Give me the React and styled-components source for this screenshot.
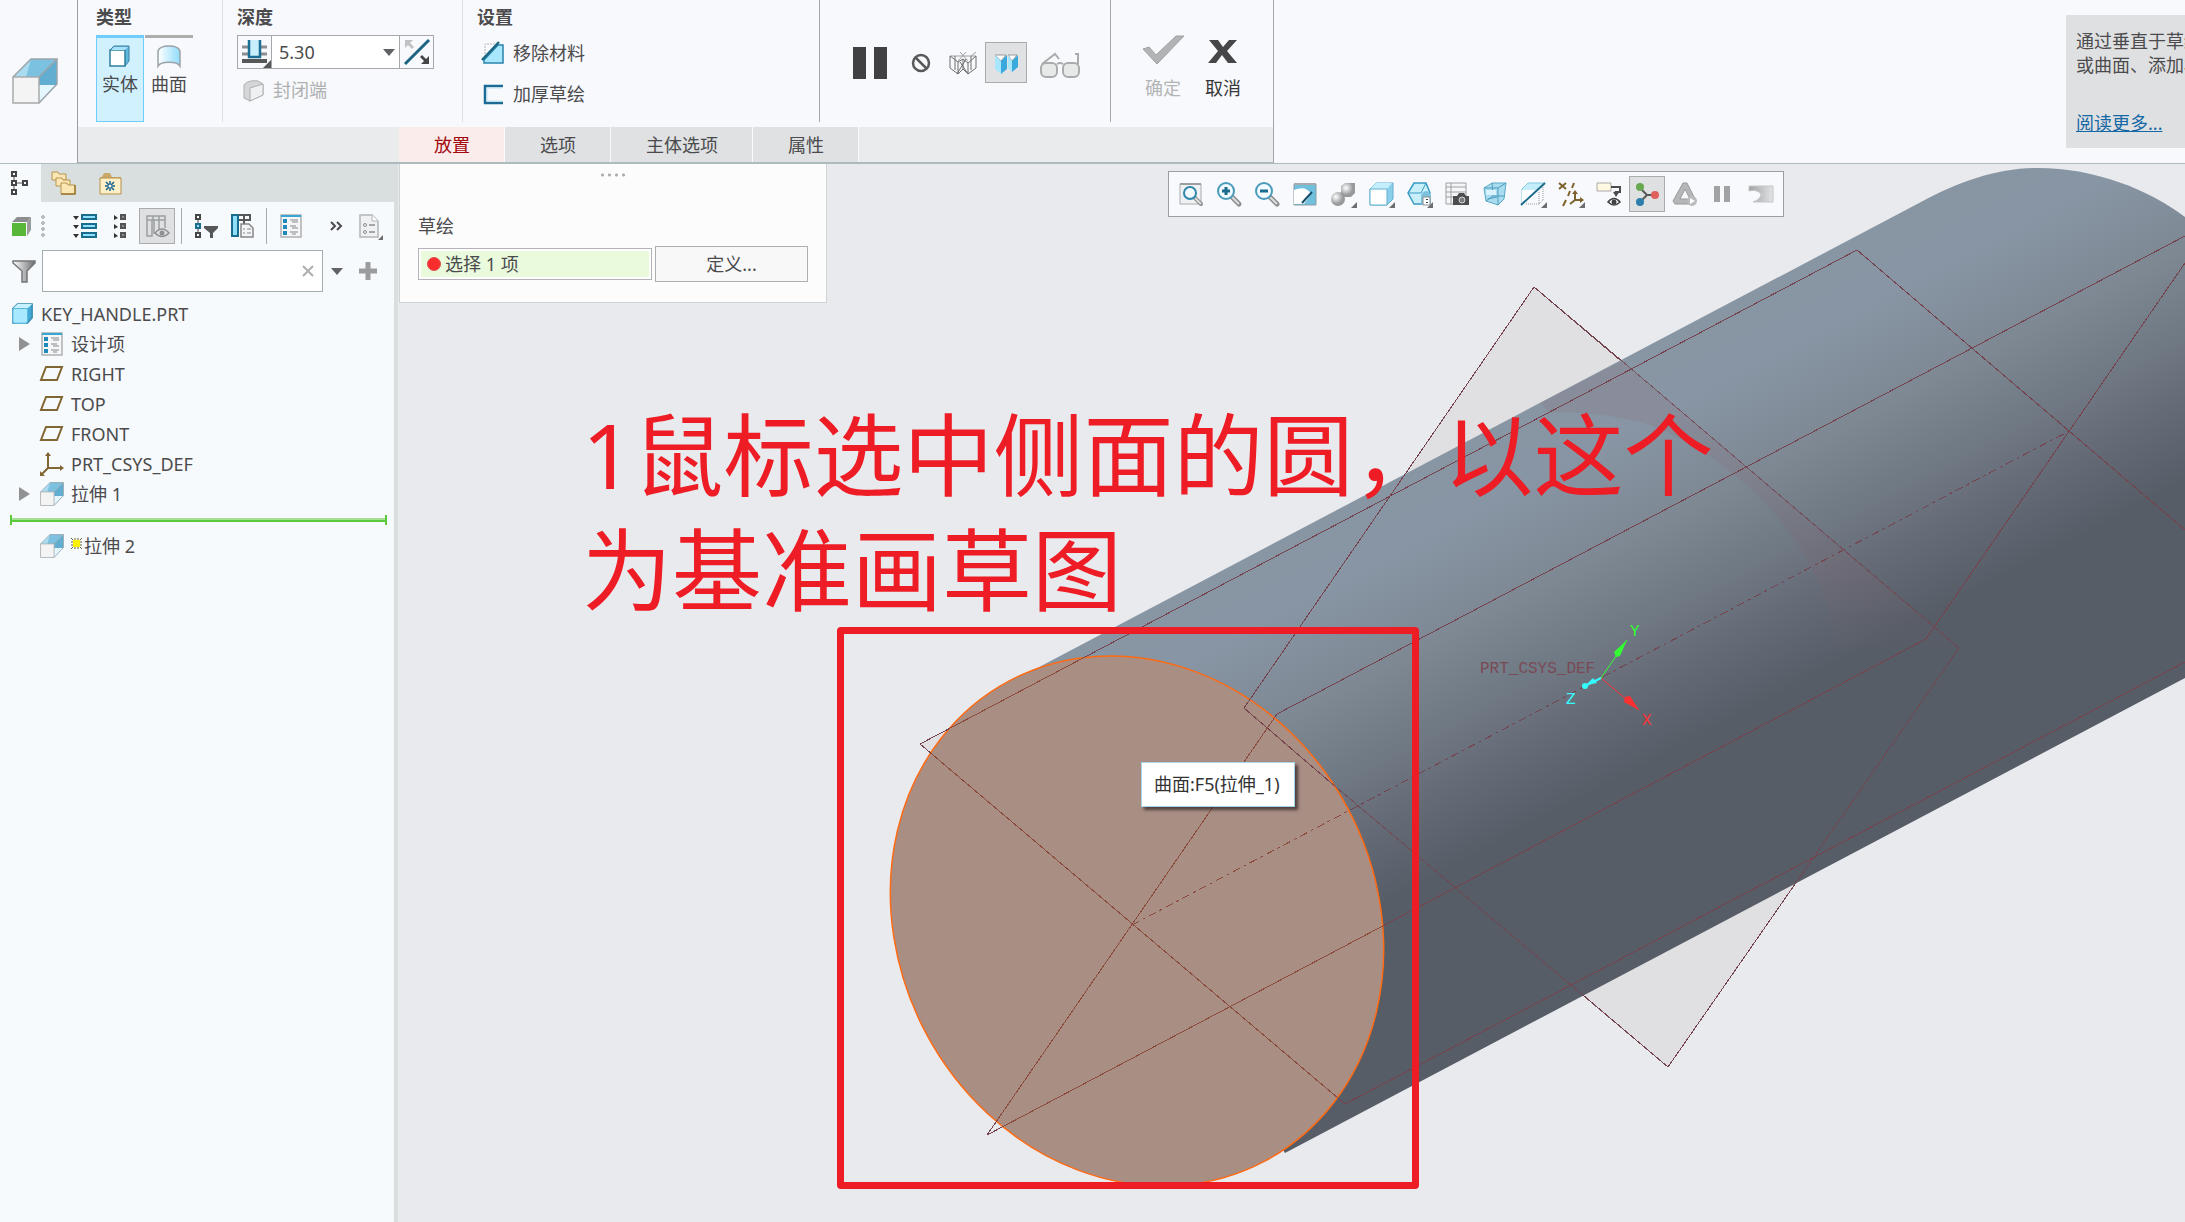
import React from 'react'
import styled, { createGlobalStyle, css } from 'styled-components'

const text = '#4b4b4d'
const panelBg = '#f7fafc'
const stripBg = '#d9dfde'
const line = '#aebabd'
const blue = '#1b6b8c'
const red = '#ee1c24'

const GlobalStyle = createGlobalStyle`
  * {
    box-sizing: border-box;
  }

  body {
    margin: 0;
    overflow: hidden;
    background: #e8eaee;
  }

  body, button, input {
    font-family: 'Noto Sans', 'Noto Sans CJK SC', sans-serif;
    font-size: 18px;
    line-height: 24px;
    color: ${text};
  }

  button {
    padding: 0;
    border: 0;
    background: none;
    white-space: nowrap;
  }
`

const Page = styled.div`
  display: flex;
  flex-direction: column;
  height: 100vh;
`

const Svg = styled.svg`
  display: block;
  flex: none;
  overflow: visible;
`

const Icon = ({ size = 24, box = 24, children }) => (
  <Svg width={size} height={size} viewBox={`0 0 ${box} ${box}`} fill="none" aria-hidden="true">
    {children}
  </Svg>
)

/* ---------- ribbon ---------- */

const Ribbon = styled.header`
  display: flex;
  height: 164px;
  flex: none;
  background: #f8f9fc;
  border-bottom: 1px solid ${line};
`

const RibbonLogo = styled.div`
  width: 78px;
  padding: 58px 0 0 12px;
  border-right: 1px solid #9a9ea1;
`

const RibbonMain = styled.div`
  display: flex;
  flex-direction: column;
  width: 1196px;
  border-right: 1px solid #a4a7aa;
`

const Groups = styled.div`
  display: flex;
  height: 127px;
`

const Group = styled.section`
  width: ${p => p.$width}px;
  padding: 5px 0 0 ${p => p.$pad || 14}px;
  margin: 0 0 5px;
  border-right: ${p => (p.$last ? 'none' : `1px solid ${p.$strong ? '#a4a7aa' : '#dfe1e4'}`)};
`

const GroupTitle = styled.h2`
  margin: 0 0 6px;
  font-size: 18px;
  line-height: 24px;
  font-weight: 700;
`

const ButtonRow = styled.div`
  display: flex;
  gap: 1px;
`

const TypeButton = styled.button`
  display: flex;
  flex-direction: column;
  align-items: center;
  gap: 4px;
  width: 48px;
  height: 87px;
  padding-top: 6px;
  border-top: 3px solid #adadad;
  ${p => p.$active && css`
    border: 1px solid #70cdfb;
    border-top: 3px solid #70cdfb;
    background: #d1f1fe;
  `}
`

const DepthField = styled.div`
  display: flex;
  width: 197px;
  height: 34px;
  background: #fff;
  border: 1px solid #a5a7a9;
`

const DepthMode = styled.button`
  display: flex;
  align-items: center;
  justify-content: center;
  width: 34px;
  background: #f8f9fc;
  border-right: 1px solid #a5a7a9;
`

const FlipButton = styled(DepthMode)`
  border-right: 0;
  border-left: 1px solid #a5a7a9;
`

const DepthInput = styled.input`
  flex: 1;
  min-width: 0;
  padding: 0 0 0 7px;
  border: 0;
  background: none;
`

const CaretButton = styled.button`
  display: flex;
  align-items: center;
  justify-content: center;
  width: 20px;
`

const OptionList = styled.div`
  display: flex;
  flex-direction: column;
  margin-top: -3px;
`

const OptionButton = styled.button`
  display: flex;
  align-items: center;
  gap: 8px;
  height: 41px;
  padding-left: 4px;
  color: ${p => (p.disabled ? '#aeb0b1' : text)};
`

const ControlRow = styled.div`
  display: flex;
  align-items: center;
  gap: 8px;
  height: 41px;
  margin-top: 37px;
`

const ControlButton = styled.button`
  display: flex;
  align-items: center;
  justify-content: center;
  width: ${p => p.$width || 42}px;
  height: 41px;
  ${p => p.$active && css`
    background: #e0e1e3;
    border: 1px solid #a9abad;
  `}
`

const ConfirmRow = styled.div`
  display: flex;
  gap: 16px;
  padding-top: 29px;
`

const ConfirmButton = styled.button`
  display: flex;
  flex-direction: column;
  align-items: center;
  gap: 10px;
  width: 44px;
  color: ${p => (p.disabled ? '#b3b5b6' : '#38383a')};
`

const DashTabs = styled.nav`
  display: flex;
  height: 36px;
  padding-left: 321px;
  background: #e9ebec;
  border-bottom: 1px solid ${line};
`

const DashTab = styled.button`
  padding: 0 34px 0 35px;
  background: ${p => (p.$active ? '#faeceb' : '#dfe1e2')};
  color: ${p => (p.$active ? '#a3080c' : text)};
  border-right: 1px solid #f8f9fc;
`

const HelpCard = styled.aside`
  width: 119px;
  height: 133px;
  margin: 15px 0 0 auto;
  padding: 14px 0 0 10px;
  background: #dfe0e1;
  white-space: nowrap;
  overflow: hidden;

  p {
    margin: 0 0 34px;
  }

  a {
    color: #1568a6;
    text-decoration: underline;
  }
`

/* ---------- model tree ---------- */

const Body = styled.div`
  display: flex;
  flex: 1;
  min-height: 0;
`

const Sidebar = styled.aside`
  display: flex;
  flex-direction: column;
  flex: none;
  width: 398px;
  background: ${panelBg};
  border-right: 4px solid ${stripBg};
`

const SideTabs = styled.div`
  display: flex;
  height: 38px;
  background: ${stripBg};
`

const SideTab = styled.button`
  display: flex;
  align-items: center;
  justify-content: center;
  width: ${p => p.$width || 46}px;
  background: ${p => (p.$active ? panelBg : 'none')};
`

const Toolbar = styled.div`
  display: flex;
  align-items: center;
  height: 48px;
  padding: 0 5px 0 4px;
`

const ToolButton = styled.button`
  display: flex;
  align-items: center;
  justify-content: center;
  flex: none;
  width: 36px;
  height: 36px;
  ${p => p.$active && css`
    background: #dfe0e2;
    border: 1px solid #a9abad;
  `}
`

const Grip = styled.span`
  width: 6px;
  height: 24px;
  margin-right: 21px;
  background: radial-gradient(circle, #b9bbbc 2px, transparent 2px) 0 0 / 6px 6px;
`

const Divider = styled.span`
  width: 1px;
  height: 36px;
  margin: 0 6px;
  background: #a9abad;
`

const Spacer = styled.span`
  flex: 1;
`

const FilterRow = styled.div`
  display: flex;
  align-items: center;
  height: 42px;
  padding-left: 12px;
`

const FilterBox = styled.div`
  display: flex;
  align-items: center;
  width: 281px;
  height: 42px;
  margin-left: 6px;
  padding-right: 8px;
  background: #fff;
  border: 1px solid #a3adaf;
`

const FilterInput = styled.input`
  flex: 1;
  min-width: 0;
  border: 0;
  background: none;
`

const SmallButton = styled.button`
  display: flex;
  align-items: center;
  justify-content: center;
  width: ${p => p.$width || 20}px;
  height: 24px;
`

const Tree = styled.ul`
  margin: 0;
  padding: 7px 0 0;
  list-style: none;
`

const TreeRow = styled.li`
  display: flex;
  align-items: center;
  height: 30px;
  padding-left: ${p => (p.$root ? 12 : 19)}px;
  gap: 7px;

  > i {
    display: flex;
    width: 14px;
  }
`

const TreeLabel = styled.span`
  display: flex;
  align-items: center;
  gap: 2px;

  svg {
    margin-bottom: 6px;
  }
`

const InsertBar = styled.li`
  display: flex;
  align-items: center;
  height: 22px;
  margin: 0 7px 0 10px;

  &::before,
  &::after {
    content: '';
    width: 2px;
    height: 10px;
    background: #5cc83c;
  }

  span {
    flex: 1;
    height: 4px;
    background: #5cc83c;
    border-top: 2px solid #a5e093;
  }
`

/* ---------- graphics area ---------- */

const Viewport = styled.main`
  position: relative;
  flex: 1;
  min-width: 0;
  overflow: hidden;
  background: #e8eaee;
`

const Scene = styled.svg`
  position: absolute;
  inset: 0;
  width: 100%;
  height: 100%;
`

const PlacementPanel = styled.section`
  position: absolute;
  top: 0;
  left: 1px;
  width: 428px;
  height: 139px;
  padding: 9px 18px 0;
  background: #fcfcfc;
  border: 1px solid #cfd4d6;
  border-top: 0;

  label {
    display: block;
    margin: 37px 0 8px;
  }
`

const PanelGrip = styled.div`
  width: 28px;
  height: 4px;
  margin: 0 auto;
  background: radial-gradient(circle, #a9abac 1px, transparent 2px) 0 0 / 7px 4px;
`

const CollectorRow = styled.div`
  display: flex;
  align-items: center;
  gap: 3px;
`

const Collector = styled.div`
  display: flex;
  align-items: center;
  gap: 4px;
  width: 234px;
  height: 32px;
  padding: 0 8px;
  background: #eafadd;
  border: 1px solid #b1b3b5;
  box-shadow: inset 0 0 0 2px #fff;

  &::before {
    content: '';
    width: 12px;
    height: 12px;
    border: 1px solid #d9544d;
    border-radius: 50%;
    background: #fb2c2c;
  }

  input {
    flex: 1;
    min-width: 0;
    padding: 0;
    border: 0;
    background: none;
  }
`

const DefineButton = styled.button`
  width: 153px;
  height: 36px;
  background: #f8f8f9;
  border: 1px solid #adafb1;
`

const ViewToolbar = styled.div`
  position: absolute;
  top: 7px;
  left: 770px;
  display: flex;
  gap: 2px;
  padding: 4px;
  background: #f8f9fc;
  border: 1px solid #9c9ea0;
`

const Tooltip = styled.div`
  position: absolute;
  top: 598px;
  left: 743px;
  padding: 9px 14px 10px 12px;
  background: #fff;
  border: 1px solid #a9d3ea;
  box-shadow: 3px 3px 3px rgba(40, 30, 30, 0.7);
  color: #333;
  white-space: nowrap;
`

const Note = styled.p`
  position: absolute;
  top: 233px;
  left: 184px;
  margin: 0;
  font-size: 90px;
  line-height: 115px;
  color: ${red};
  white-space: nowrap;
`

const Frame = styled.div`
  position: absolute;
  top: 463px;
  left: 439px;
  width: 582px;
  height: 562px;
  border: 7px solid ${red};
  border-radius: 4px;
`

/* ---------- icons ---------- */

const Caret = () => (
  <svg width="12" height="7" viewBox="0 0 12 7" aria-hidden="true"><path d="M0 0h12L6 7z" fill="#606264" /></svg>
)

const Corner = () => <path d="M26 20v6h-6z" fill="#6b6d6f" />

const ExtrudeIcon = ({ size }) => (
  <Icon size={size} box={46}>
    <path d="M1 19 19 1h26L27 19z" fill="#a9dcf1" />
    <path d="M19 1 14 19h13L45 1z" fill="#7cc2e0" />
    <path d="M27 19 45 1v25L27 45z" fill="#62aed0" />
    <path d="M27 27h17L27 45z" fill="#e4f7ff" />
    <path d="M1 19 19 1h26v25L27 45M27 19 45 1" stroke="#9aa4aa" strokeWidth="1.5" />
    <path d="M1 19h26v26H1z" fill="#f4f4f5" stroke="#a8a9ab" strokeWidth="1.5" />
  </Icon>
)

const SolidIcon = () => (
  <Icon>
    <path d="M2 6 6 2h15v15l-4 5z" fill="#5fb9df" stroke="#3a7f9f" />
    <path d="M2 6h15v16H2z" fill="#fff" stroke="#2f7f9f" strokeWidth="1.5" />
    <path d="m3 6 3-3h14l-3 3z" fill="#a8e2f8" />
  </Icon>
)

const SurfaceIcon = () => (
  <Icon>
    <defs>
      <linearGradient id="surf"><stop offset="0" stopColor="#fff" /><stop offset="1" stopColor="#8fdcfb" /></linearGradient>
    </defs>
    <path d="M1 22V7c1-3 4-5 11-5s10 2 11 5v15c-3-5-19-5-22 0z" fill="url(#surf)" stroke="#9aa3a8" strokeWidth="1.5" />
  </Icon>
)

const BlindDepthIcon = () => (
  <Icon size={28} box={28}>
    <path d="M1 9h6M1 16h6M20 9h6M20 16h6" stroke="#8b8d90" strokeWidth="3" />
    <path d="M1 23h25" stroke="#555759" strokeWidth="4" />
    <path d="M8 2v17h11V2" fill="#c9eefb" stroke="#1b6f95" strokeWidth="2.5" />
    <path d="M30 22v8h-8z" fill="#555759" />
  </Icon>
)

const FlipIcon = () => (
  <Icon size={28} box={28}>
    <path d="M2 26 26 2" stroke="#1b6482" strokeWidth="3" />
    <path d="M2 2h8L7 5l4 4-2 2-4-4-3 3z" fill="#bfc1c2" />
    <path d="M26 26h-8l3-3-4-4 2-2 4 4 3-3z" fill="#444648" />
  </Icon>
)

const CapIcon = () => (
  <Icon>
    <path d="M3 7c2-3 7-5 14-4l5 3v11L9 23l-6-3z" fill="#d4d6d7" stroke="#aeb0b1" />
    <path d="M9 10 22 6v11L9 23z" fill="#eff0f1" stroke="#aeb0b1" />
  </Icon>
)

const RemoveIcon = () => (
  <Icon>
    <path d="M4 22V3h12" stroke="#b2b4b6" strokeDasharray="2 1" />
    <path d="M3 22v-3L17 4h5v18z" fill="#a9e8fc" stroke="#2784ab" strokeWidth="1.5" />
    <path d="M1 19 18 1" stroke="#1b6482" strokeWidth="2.5" />
  </Icon>
)

const ThickenIcon = () => (
  <Icon><path d="M22 4H4v17h18" stroke="#1b6b94" strokeWidth="2.5" /><path d="M21 6H6v13h15" stroke="#bfe4f2" /></Icon>
)

const PauseIcon = () => (
  <Icon size={34} box={34}><path d="M0 1h13v32H0zM21 1h13v32H21z" fill="#414143" /></Icon>
)

const NoIcon = () => (
  <Icon size={20} box={20}>
    <circle cx="11" cy="10" r="8" stroke="#58595b" strokeWidth="2.5" />
    <path d="m5 4 12 12" stroke="#58595b" strokeWidth="2.5" />
  </Icon>
)

const WireIcon = () => (
  <Icon size={28} box={28}>
    <path d="M1 7h26M9 12l8-9M19 12l-8-9M22 7l5-4" stroke="#a0a1a3" />
    <path d="M1 7v12l8 6 5-5V10M1 7l8 6v12M14 10l-5 3M14 10l5 4v11M14 20l5 5 8-6V7l-8 7M6 7v14M22 7v14" stroke="#6e6f71" />
    <path d="m8 25 9-15M19 25l-8-12" stroke="#6e6f71" />
  </Icon>
)

const PairIcon = () => (
  <Icon size={28} box={28}>
    <path d="M3 6h11l-5 6z" fill="#fff" stroke="#999" />
    <path d="m3 6 6 6v13l-6-5z" fill="#a8e7fb" />
    <path d="m15 6-6 6v13l6-5z" fill="#3aa9dd" />
    <path d="M16 6h9l-5 6z" fill="#fff" stroke="#999" />
    <path d="m16 6 4 6v11l-4-4z" fill="#a8e7fb" />
    <path d="m26 6-6 6v11l6-5z" fill="#3aa9dd" />
  </Icon>
)

const GlassesIcon = () => (
  <Icon size={40} box={40}>
    <rect x="1" y="20" width="16" height="14" rx="5" fill="#e7e8e8" stroke="#a9abac" strokeWidth="2" />
    <rect x="23" y="20" width="16" height="14" rx="5" fill="#e7e8e8" stroke="#a9abac" strokeWidth="2" />
    <path d="M17 21q3-2 6 0M2 21 15 11l4 5M38 21V11h-3" stroke="#a9abac" strokeWidth="2" />
  </Icon>
)

const CheckIcon = () => (
  <svg width="42" height="32" viewBox="0 0 42 32" aria-hidden="true"><path d="m1 15 6-2 7 8L34 2h8L15 30z" fill="#b2b3b4" stroke="#a0a1a2" /></svg>
)

const CrossIcon = () => (
  <svg width="30" height="32" viewBox="0 0 30 32" aria-hidden="true"><path d="M1 6h9l5 7 6-7h8L19 17l10 12h-9l-6-8-6 8H0l10-12z" fill="#464648" /></svg>
)

const TreeTabIcon = () => (
  <Icon>
    <path d="M5 5v14M5 12h12" stroke="#555" />
    <path d="M3 1h4v4H3zM3 10h4v4H3zM3 19h4v4H3zM14 10h4v4h-4z" fill="#fff" stroke="#454547" strokeWidth="2" />
  </Icon>
)

const FoldersIcon = () => (
  <Icon>
    <g fill="#fbe7b4" stroke="#b89450">
      <path d="M0 9V1h6l1 2h7v6H0z" />
      <path d="M4 15V7h6l1 2h7v6H4z" />
      <path d="M9 22V12h6l1 2h7v9H9z" />
    </g>
    <path d="M23 14v9H9" stroke="#9c7730" strokeWidth="1.5" />
  </Icon>
)

const StarFolderIcon = () => (
  <Icon>
    <path d="M2 6h2l2-4h6l2 4h9v17H2z" fill="#cba96a" />
    <path d="M2 7h21v16H2z" fill="#fdf0c9" stroke="#b58f4b" />
    <path d="M12 10v10M7 15h10M8 11l8 8M16 11l-8 8" stroke="#135f86" strokeWidth="1.5" />
    <circle cx="12" cy="15" r="1.5" fill="#fff" />
  </Icon>
)

const GreenCubeIcon = () => (
  <Icon>
    <path d="m2 8 5-5h14l-4 5z" fill="#8b8d8f" />
    <path d="m17 8 4-5v13l-4 6z" fill="#999b9d" />
    <path d="M2 9h14v13H2z" fill="#58b738" />
  </Icon>
)

const ExpandIcon = () => (
  <Icon>
    <path d="M0 2h6L3 6zM0 11h6l-3 4zM0 20h6l-3 4z" fill="#333" />
    <path d="M9 1h14v4H9zM9 10h14v4H9zM9 19h14v4H9z" fill="#8fe0fb" stroke="#1b6b8c" strokeWidth="2" />
  </Icon>
)

const CollapseIcon = () => (
  <Icon>
    <path d="M5 1v5l4-2zM5 10v5l4-2zM5 19v5l4-2z" fill="#333" />
    <path d="M12 1h4v4h-4zM12 10h4v4h-4zM12 19h4v4h-4z" fill="#8b8d8f" stroke="#525456" strokeWidth="2" />
  </Icon>
)

const ColumnsEyeIcon = () => (
  <Icon>
    <path d="M2 2h18v4H2zM2 6h5v16H2zM14 6v9M9 6v14M20 6v8M8 2v4M14 2v4" stroke="#9c9ea0" strokeWidth="1.5" />
    <path d="M10 19q7-8 14 0-7 7-14 0z" fill="#dfe0e2" stroke="#8e9092" strokeWidth="1.5" />
    <circle cx="17" cy="19" r="2.5" fill="#8e9092" />
  </Icon>
)

const TreeFilterIcon = () => (
  <Icon>
    <path d="M4 4v17" stroke="#444" />
    <path d="M2 1h4v4H2zM2 19h4v4H2z" fill="#fff" stroke="#444648" strokeWidth="2" />
    <path d="M2 10h4v4H2z" fill="#8fe0fb" stroke="#1b6b8c" strokeWidth="2" />
    <path d="M10 12h14v2l-5 5v5h-3v-5l-6-5z" fill="#555759" />
  </Icon>
)

const ColumnsDocIcon = () => (
  <Icon>
    <path d="M8 1h12v5H8M14 1v5M14 6v4" stroke="#555759" strokeWidth="2" />
    <path d="M2 1h6v21H2z" fill="#8fe0fb" stroke="#1b6b8c" strokeWidth="2" />
    <path d="M11 10h8l4 4v9H11z" fill="#f3f4f5" stroke="#85878a" strokeWidth="1.5" />
    <path d="M13 15h2M13 19h2M17 15h4M17 19h4" stroke="#85878a" />
  </Icon>
)

const ItemsIcon = () => (
  <Icon>
    <path d="M2 1h20v22H2z" fill="#f5f6f7" stroke="#aeb0b2" strokeWidth="1.5" />
    <path d="M2 2h20" stroke="#37a6d3" strokeWidth="2" />
    <g stroke="#2089bb" strokeWidth="2">
      <path d="M5 6h2v2H5zM5 12h2v2H5zM5 18h2v2H5z" />
    </g>
    <path d="M11 6h8M13 8h6M11 12h6M13 14h6M11 18h8M13 20h4" stroke="#85878a" />
  </Icon>
)

const MoreIcon = () => (
  <Icon><path d="m8 8 4 4-4 4M14 8l4 4-4 4" stroke="#4b4b4d" strokeWidth="2" /></Icon>
)

const DocIcon = () => (
  <Icon>
    <path d="M1 1h12l6 6v16H1z" fill="#f0f1f2" stroke="#b3b5b7" strokeWidth="1.5" />
    <path d="M13 1v6h6" fill="#fff" stroke="#b3b5b7" />
    <circle cx="6" cy="11" r="1.5" stroke="#8b8d8f" />
    <circle cx="6" cy="18" r="1.5" stroke="#8b8d8f" />
    <path d="M10 11h6M10 18h6" stroke="#8b8d8f" strokeWidth="1.5" />
    <path d="M24 21v5h-5z" fill="#6b6d6f" />
  </Icon>
)

const FunnelIcon = () => (
  <Icon>
    <defs>
      <linearGradient id="funnel"><stop offset="0" stopColor="#fff" /><stop offset="1" stopColor="#6c6e70" /></linearGradient>
    </defs>
    <path d="M1 2h22v2l-8 8v11h-5V12L1 4z" fill="url(#funnel)" stroke="#747678" strokeWidth="1.5" />
  </Icon>
)

const PartIcon = () => (
  <Icon size={22}>
    <path d="M1 6 6 1h16v15l-5 6H1z" fill="#43a9d6" stroke="#3489ad" strokeWidth="1.5" />
    <path d="M1 6 6 1h16l-5 5z" fill="#c8f1ff" />
    <rect x="1" y="6" width="16" height="16" rx="2" fill="#a8e9ff" stroke="#54b5da" />
  </Icon>
)

const PlaneIcon = () => (
  <Icon><path d="M6 5h16l-5 13H1z" stroke="#806632" strokeWidth="2" /></Icon>
)

const CsysIcon = () => (
  <Icon>
    <path d="M8 2v14h14M8 16l-6 6" stroke="#806632" strokeWidth="2" />
    <path d="m5 4 3-4 3 4zM20 13l4 3-4 3zM0 19v5h5z" fill="#806632" />
  </Icon>
)

const Twisty = () => (
  <svg width="12" height="14" viewBox="0 0 12 14" aria-hidden="true"><path d="M0 0v14l11-7z" fill="#8f9193" /></svg>
)

const NewIcon = () => (
  <Icon size={11} box={11}>
    <path d="M4 0v2M7 0v2M4 9v2M7 9v2M0 4h2M0 7h2M9 4h2M9 7h2M0 0l3 3M11 0 8 3M0 11l3-3M11 11 8 8" stroke="#66652f" />
    <path d="M2 2h7v7H2z" fill="#fdf100" />
  </Icon>
)

const Lens = () => (
  <>
    <path d="m14 14 8 8" stroke="#8b8d8f" strokeWidth="5" strokeLinecap="round" />
    <path d="m15 15 7 7" stroke="#dcdddd" strokeWidth="2" />
    <circle cx="9" cy="9" r="8" fill="#f2fbff" stroke="#4a9bba" strokeWidth="2" />
  </>
)

const viewIcons = [
  ['重新调整', (
    <>
      <path d="M1 2h21v20H1z" fill="#eff1f2" stroke="#a8aaac" />
      <path d="M1 2h21" stroke="#9c9ea0" strokeWidth="2" />
      <path d="m15 15 7 7" stroke="#8b8d8f" strokeWidth="4" strokeLinecap="round" />
      <path d="m16 16 6 6" stroke="#dcdddd" strokeWidth="2" />
      <circle cx="11" cy="11" r="6" fill="#f2fbff" stroke="#2f88ab" strokeWidth="2" />
    </>
  )],
  ['放大', <><Lens /><path d="M5 9h8M9 5v8" stroke={blue} strokeWidth="3" /></>],
  ['缩小', <><Lens /><path d="M5 9h8" stroke={blue} strokeWidth="3" /></>],
  ['重画', (
    <>
      <path d="M1 2h22v21H1z" fill="#6fbfdd" stroke="#8d9ca3" />
      <path d="M1 8q12-5 17 4L11 22H1z" fill="#fff" />
      <path d="M1 2h22" stroke="#a8aaac" strokeWidth="2" />
      <path d="m9 21 10-11" stroke="#174f6b" strokeWidth="2" />
    </>
  )],
  ['渲染选项', (
    <>
      <defs>
        <radialGradient id="ball" cx="0.35" cy="0.35"><stop offset="0" stopColor="#fff" /><stop offset="1" stopColor="#98999b" /></radialGradient>
      </defs>
      <path d="m10 4 4-3h10v10l-4 4H10z" fill="url(#ball)" />
      <circle cx="7" cy="17" r="7" fill="url(#ball)" />
      <Corner />
    </>
  )],
  ['显示样式', (
    <>
      <path d="m1 7 6-6h17v16l-6 6H1z" fill="#8bd0ea" stroke="#62b0d0" />
      <path d="m1 7 6-6h16l-5 6z" fill="#c3effd" />
      <path d="M1 7h17v16H1z" fill="#fff" stroke="#62b0d0" />
      <Corner />
    </>
  )],
  ['已保存方向', (
    <>
      <path d="M7 1h12l4 10-5 11H7L1 11z" fill="#c9effb" stroke="#3a9bc2" strokeWidth="1.5" />
      <path d="M1 11h13l5-10" stroke="#3a9bc2" />
      <path d="M14 13q5-8 10 0v9H14z" fill="#7cc2de" />
      <path d="M16 15h7v8h-7z" fill="#fff" stroke="#8b8d8f" />
      <path d="M19 17h2v1h-2zM19 20h2v1h-2z" fill="#444" />
      <Corner />
    </>
  )],
  ['视图管理器', (
    <>
      <path d="M1 1h20v21H1zM1 5h20M6 1v21M1 10h20M1 15h20" fill="#f5f6f7" stroke="#9c9ea0" />
      <path d="M8 14h4l2-3h5l2 3h3v9H8z" fill="#4b4d4f" />
      <circle cx="17" cy="18" r="3" fill="#7b7d80" stroke="#d5d6d7" />
    </>
  )],
  ['透视图', (
    <>
      <path d="m1 6 8-5h14l-2 16-6 6-12-4z" fill="#a9dcee" stroke="#5ba9c8" />
      <path d="M1 6h14l8-5M15 6v17M3 19l7-5h12M9 1l1 13M5 17l9-2" stroke="#4a9dbf" />
      <path d="M3 8h10v5H3z" fill="#d8f3fc" />
    </>
  )],
  ['截面', (
    <>
      <path d="m1 7 6-6h17L1 22z" fill="#c3edf9" stroke="#87cbe3" />
      <path d="M1 8h14L1 22z" fill="#fff" />
      <path d="M5 22h13V10M22 18V5M18 22l4-4" stroke="#97999b" strokeDasharray="1 1" />
      <path d="M0 23 24 1" stroke={blue} strokeWidth="2" />
      <Corner />
    </>
  )],
  ['基准显示过滤器', (
    <>
      <path d="m0 1 7 6M7 1 0 7M15 1l-2 5M11 9l-2 5M7 18l-3 6" stroke="#7e622b" strokeWidth="2" />
      <path d="M16 10v8h8M16 18l-5 4" stroke="#7e622b" strokeWidth="2" />
      <path d="m13 12 3-4 3 4zM21 15l4 3-4 3z" fill="#7e622b" />
      <Corner />
    </>
  )],
  ['注释显示', (
    <>
      <path d="M0 1h14v8H0z" fill="#fff8e2" stroke="#a9a9a6" />
      <path d="M14 5h9v5h-5" stroke="#4b4d4f" strokeWidth="2" />
      <path d="m16 10 7-1-4 6z" fill="#4b4d4f" />
      <path d="M11 20q6-7 12 0-6 6-12 0z" fill="#fff" stroke="#3e4042" strokeWidth="1.5" />
      <circle cx="17" cy="20" r="2.5" fill="#3e4042" />
    </>
  )],
  ['旋转中心', (
    <>
      <path d="m4 5 8 8h9M12 13l-8 8" stroke="#555759" strokeWidth="2" />
      <circle cx="5" cy="5" r="4" fill="#68a84f" />
      <circle cx="20" cy="13" r="4" fill="#e0605c" />
      <circle cx="5" cy="20" r="4" fill="#2d80ac" />
    </>
  )],
  ['仿真', (
    <>
      <path d="M10 1h4l9 18-3 3H2l-2-3z" fill="#b4b6b8" stroke="#98999b" />
      <path d="m12 7 5 10H7z" fill="#f8f9fc" stroke="#98999b" />
      <circle cx="19" cy="19" r="5" fill="#b9bbbc" />
      <path d="m17 16 5 3-5 3z" fill="#fff" />
    </>
  )],
  ['暂停', <path d="M3 4h6v16H3zM13 4h6v16h-6z" fill="#a1a2a4" />],
  ['继续', (
    <>
      <defs>
        <linearGradient id="flow"><stop offset="0" stopColor="#9fa1a3" /><stop offset="1" stopColor="#e3e4e5" /></linearGradient>
      </defs>
      <path d="M0 4h24v16H4q8-3 8-8-4-5-12-3z" fill="url(#flow)" stroke="#c4c6c7" />
    </>
  )]
]

/* ---------- scene ---------- */

const edges = [
  'M920 744 1857 250 2185 530',
  'M920 744 1345 1104 2185 662',
  'M987 1135 1277 714 2185 236',
  'M987 1135 1926 639 2185 263'
]

const Model = () => (
  <Scene viewBox="398 164 1787 1058" preserveAspectRatio="xMinYMin slice" fill="none">
    <defs>
      <linearGradient id="shade" gradientUnits="userSpaceOnUse" x1="1400" y1="476" x2="1654" y2="959">
        <stop offset="0" stopColor="#8895a3" />
        <stop offset="0.12" stopColor="#8895a4" />
        <stop offset="0.3" stopColor="#7d8893" />
        <stop offset="0.42" stopColor="#717b86" />
        <stop offset="0.54" stopColor="#666c77" />
        <stop offset="0.68" stopColor="#575d67" />
        <stop offset="1" stopColor="#575d67" />
      </linearGradient>
      <linearGradient id="tint" gradientUnits="userSpaceOnUse" x1="0" y1="380" x2="0" y2="650">
        <stop offset="0" stopColor="#8a5a66" stopOpacity="0.14" />
        <stop offset="0.7" stopColor="#8a5a66" stopOpacity="0.14" />
        <stop offset="1" stopColor="#8a5a66" stopOpacity="0" />
      </linearGradient>
      <clipPath id="faceClip">
        <ellipse cx="1137" cy="921" rx="272" ry="239" transform="rotate(62 1137 921)" />
      </clipPath>
    </defs>
    <path d="M1534 287 1959 648 1668 1067 1244 708z" fill="#e0dfe1" stroke="#75434e" shapeRendering="crispEdges" />
    <path d="M920 744 1000 702 987 802z" fill="#e0dfe1" />
    <path
      d="M1024 675 1921 202C1960 181 1998 168 2038 168c57 0 112 22 147 49v461L1285 1153 1137 921z"
      fill="url(#shade)"
    />
    <path d="M1622 361 1959 648 1838 648C1825 560 1760 470 1650 425 1615 415 1580 411 1550 413l-10-10z" fill="url(#tint)" />
    <ellipse cx="1137" cy="921" rx="272" ry="239" transform="rotate(62 1137 921)" fill="#a98e84" stroke="#ff6a13" strokeWidth="1.5" />
    <g stroke="#75434e" shapeRendering="crispEdges">
      {edges.map(d => <path key={d} d={d} />)}
      <path d="M1622 361 1534 287 1244 708 1330 782" />
      <path d="M1622 361 1959 648 1668 1067 1330 782" opacity="0.75" />
      <path d="M1132 925 2071 430" strokeDasharray="8 4 3 4" />
    </g>
    <g stroke="#8b4a3c" clipPath="url(#faceClip)" shapeRendering="crispEdges">
      {edges.map(d => <path key={d} d={d} />)}
      <path d="M1132 925 2071 430" strokeDasharray="8 4 3 4" />
    </g>
    <g fontFamily="Liberation Mono, monospace" fontSize="16">
      <text x="1480" y="673" fill="#7a4a55">PRT_CSYS_DEF</text>
      <text x="1630" y="636" fill="#33ff33">Y</text>
      <text x="1642" y="725" fill="#ff3030">X</text>
      <text x="1566" y="704" fill="#33ffff">Z</text>
    </g>
    <path d="M1601 678 1627 640" stroke="#33ff33" />
    <path d="m1627 640-13 12 2 5 4-1z" fill="#33ff33" />
    <path d="m1601 678 38 32" stroke="#ff3030" />
    <path d="m1639 710-9-14-5 1-1 5z" fill="#ff3030" />
    <path d="m1601 678-16 8" stroke="#33ffff" strokeWidth="2" />
    <path d="m1586 685 7-7 4 5z" fill="#33ffff" />
    <circle cx="1585" cy="686" r="3" fill="#33ffff" />
  </Scene>
)

const treeItems = [
  { label: '设计项', icon: <ItemsIcon />, open: true },
  { label: 'RIGHT', icon: <PlaneIcon /> },
  { label: 'TOP', icon: <PlaneIcon /> },
  { label: 'FRONT', icon: <PlaneIcon /> },
  { label: 'PRT_CSYS_DEF', icon: <CsysIcon /> },
  { label: '拉伸 1', icon: <ExtrudeIcon size={24} />, open: true }
]

const RibbonBar = () => (
  <Ribbon>
    <RibbonLogo><ExtrudeIcon size={46} /></RibbonLogo>
    <RibbonMain>
      <Groups>
        <Group $width={145} $pad={18}>
          <GroupTitle>类型</GroupTitle>
          <ButtonRow>
            <TypeButton $active><SolidIcon />实体</TypeButton>
            <TypeButton><SurfaceIcon />曲面</TypeButton>
          </ButtonRow>
        </Group>
        <Group $width={240}>
          <GroupTitle>深度</GroupTitle>
          <DepthField>
            <DepthMode aria-label="深度选项"><BlindDepthIcon /></DepthMode>
            <DepthInput aria-label="深度值" defaultValue="5.30" />
            <CaretButton aria-label="最近的值"><Caret /></CaretButton>
            <FlipButton aria-label="反向"><FlipIcon /></FlipButton>
          </DepthField>
          <OptionButton disabled><CapIcon />封闭端</OptionButton>
        </Group>
        <Group $width={357} $strong>
          <GroupTitle>设置</GroupTitle>
          <OptionList>
            <OptionButton><RemoveIcon />移除材料</OptionButton>
            <OptionButton><ThickenIcon />加厚草绘</OptionButton>
          </OptionList>
        </Group>
        <Group $width={291} $pad={30} $strong>
          <ControlRow>
            <ControlButton $width={40} aria-label="暂停"><PauseIcon /></ControlButton>
            <ControlButton $width={43} aria-label="无预览"><NoIcon /></ControlButton>
            <ControlButton $width={28} aria-label="分离"><WireIcon /></ControlButton>
            <ControlButton $active aria-label="连接"><PairIcon /></ControlButton>
            <ControlButton $width={50} aria-label="校验"><GlassesIcon /></ControlButton>
          </ControlRow>
        </Group>
        <Group $width={162} $pad={30} $last>
          <ConfirmRow>
            <ConfirmButton disabled><CheckIcon />确定</ConfirmButton>
            <ConfirmButton><CrossIcon />取消</ConfirmButton>
          </ConfirmRow>
        </Group>
      </Groups>
      <DashTabs>
        <DashTab $active>放置</DashTab>
        <DashTab>选项</DashTab>
        <DashTab>主体选项</DashTab>
        <DashTab>属性</DashTab>
      </DashTabs>
    </RibbonMain>
    <HelpCard>
      <p>通过垂直于草绘<br />或曲面、添加材</p>
      <a href="#more">阅读更多...</a>
    </HelpCard>
  </Ribbon>
)

const ModelTree = () => (
  <Sidebar>
    <SideTabs>
      <SideTab $active $width={41} aria-label="模型树"><TreeTabIcon /></SideTab>
      <SideTab aria-label="文件夹浏览器"><FoldersIcon /></SideTab>
      <SideTab aria-label="收藏夹"><StarFolderIcon /></SideTab>
    </SideTabs>
    <Toolbar>
      <ToolButton aria-label="模型"><GreenCubeIcon /></ToolButton>
      <Grip />
      <ToolButton aria-label="全部展开"><ExpandIcon /></ToolButton>
      <ToolButton aria-label="全部折叠"><CollapseIcon /></ToolButton>
      <ToolButton $active aria-label="显示列"><ColumnsEyeIcon /></ToolButton>
      <Divider />
      <ToolButton aria-label="树过滤器"><TreeFilterIcon /></ToolButton>
      <ToolButton aria-label="树列"><ColumnsDocIcon /></ToolButton>
      <Divider />
      <ToolButton aria-label="设计项"><ItemsIcon /></ToolButton>
      <Spacer />
      <ToolButton aria-label="更多"><MoreIcon /></ToolButton>
      <ToolButton aria-label="设置"><DocIcon /></ToolButton>
    </Toolbar>
    <FilterRow>
      <FunnelIcon />
      <FilterBox>
        <FilterInput aria-label="过滤" />
        <SmallButton $width={12} aria-label="清除">
          <Icon size={12} box={12}><path d="m1 1 10 10M11 1 1 11" stroke="#adafb1" strokeWidth="2" /></Icon>
        </SmallButton>
      </FilterBox>
      <SmallButton $width={28} aria-label="过滤选项"><Caret /></SmallButton>
      <SmallButton $width={34} aria-label="添加">
        <Icon size={18} box={18}><path d="M9 0v18M0 9h18" stroke="#9a9c9e" strokeWidth="5" /></Icon>
      </SmallButton>
    </FilterRow>
    <Tree>
      <TreeRow $root><PartIcon />KEY_HANDLE.PRT</TreeRow>
      {treeItems.map(item => (
        <TreeRow key={item.label}>
          <i>{item.open && <Twisty />}</i>
          {item.icon}
          {item.label}
        </TreeRow>
      ))}
      <InsertBar><span /></InsertBar>
      <TreeRow>
        <i />
        <ExtrudeIcon size={24} />
        <TreeLabel><NewIcon />拉伸 2</TreeLabel>
      </TreeRow>
    </Tree>
  </Sidebar>
)

export default function App() {
  return (
    <Page>
      <GlobalStyle />
      <RibbonBar />
      <Body>
        <ModelTree />
        <Viewport>
          <Model />
          <PlacementPanel>
            <PanelGrip />
            <label htmlFor="sketch">草绘</label>
            <CollectorRow>
              <Collector><input id="sketch" readOnly value="选择 1 项" /></Collector>
              <DefineButton>定义...</DefineButton>
            </CollectorRow>
          </PlacementPanel>
          <ViewToolbar>
            {viewIcons.map(([name, drawing]) => (
              <ToolButton key={name} $active={name === '旋转中心'} aria-label={name}>
                <Icon>{drawing}</Icon>
              </ToolButton>
            ))}
          </ViewToolbar>
          <Note>1鼠标选中侧面的圆，以这个<br />为基准画草图</Note>
          <Frame />
          <Tooltip>曲面:F5(拉伸_1)</Tooltip>
        </Viewport>
      </Body>
    </Page>
  )
}
